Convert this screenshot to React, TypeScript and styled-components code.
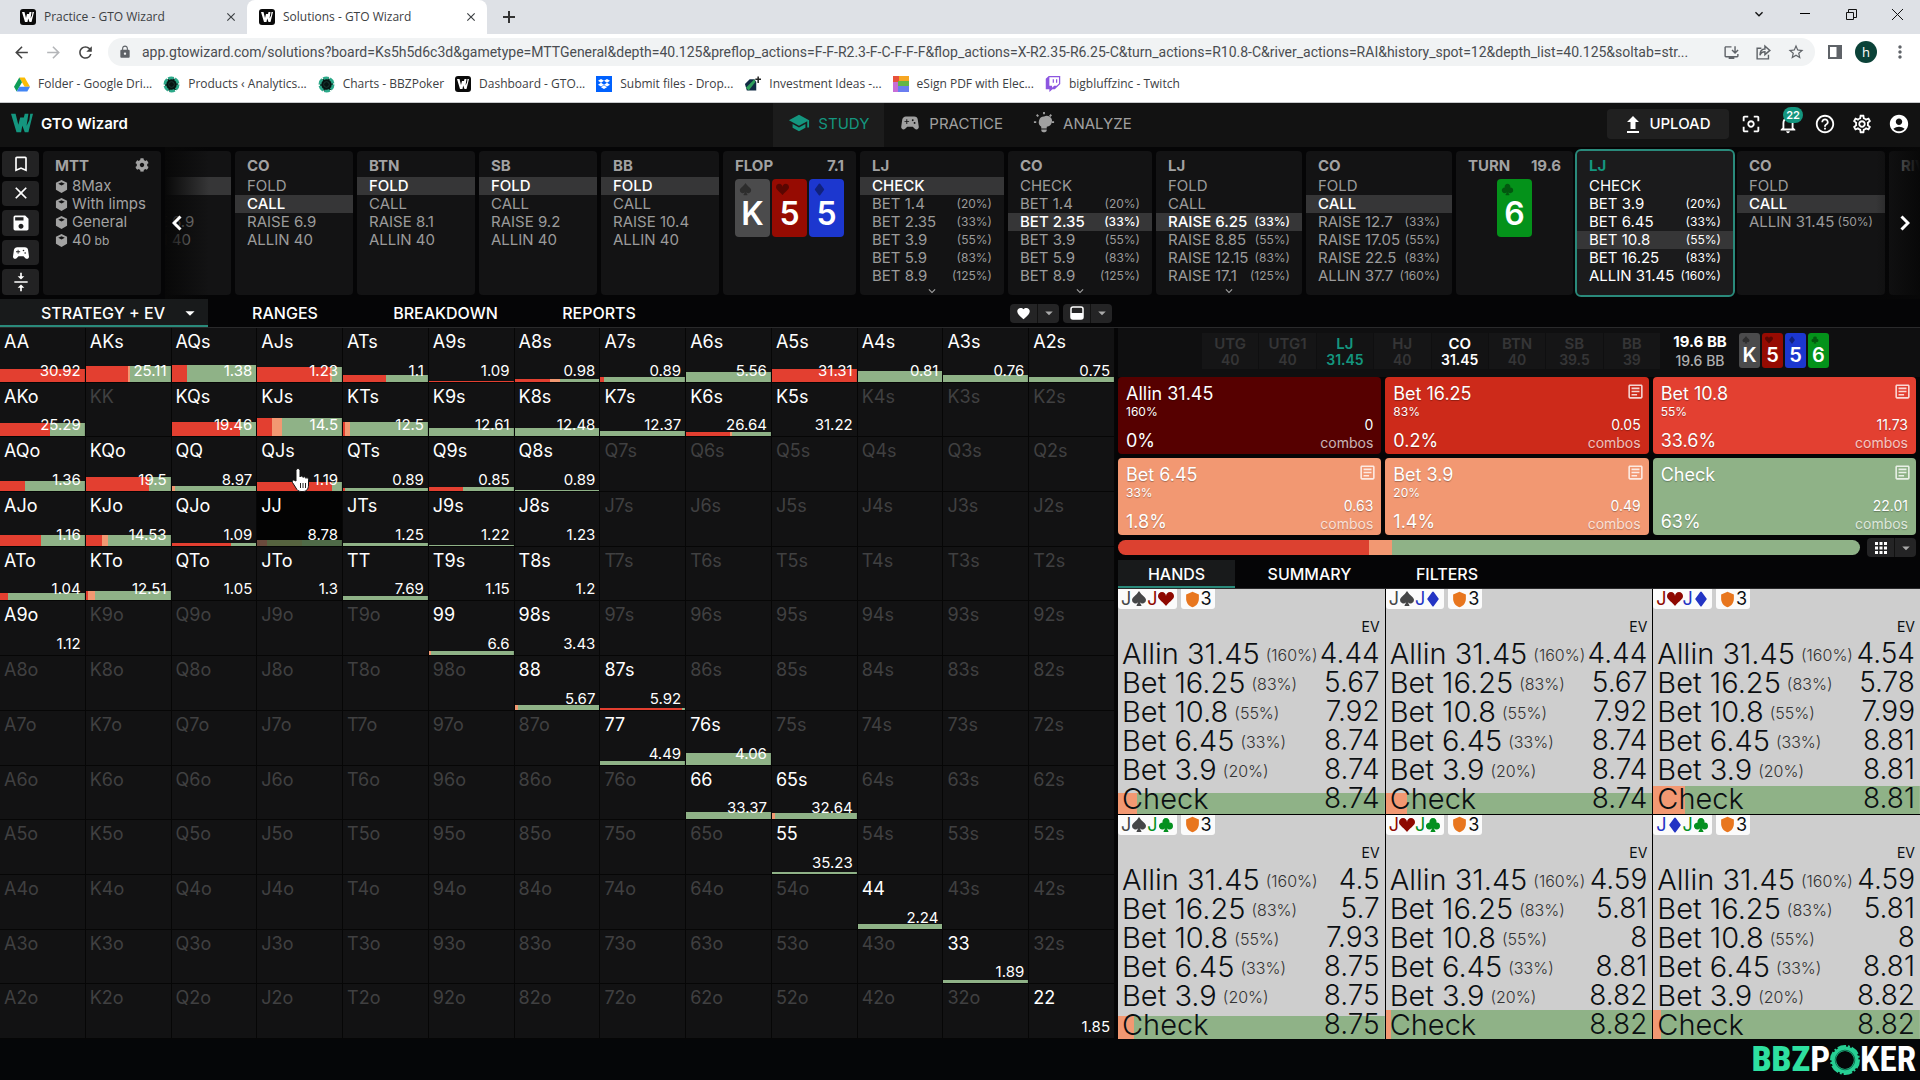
import React, { useLayoutEffect, useRef } from "react";
import styled, { createGlobalStyle, css } from "styled-components";
import {
  MdAccountCircle, MdApps, MdArrowBack, MdArrowDropDown, MdArrowForward, MdBookmarkBorder, MdCenterFocusWeak,
  MdClose, MdFavorite, MdHelpOutline, MdLock, MdMoreVert, MdNotificationsNone, MdOutlineArticle,
  MdOutlineSettings, MdRefresh, MdSave, MdSchool, MdShield, MdSportsEsports, MdStarBorder,
  MdVerticalAlignCenter, MdInstallDesktop, MdKeyboardArrowDown,
} from "react-icons/md";
import { BsSuitClubFill, BsSuitDiamondFill, BsSuitHeartFill, BsSuitSpadeFill } from "react-icons/bs";
import { FaCog, FaDropbox, FaTwitch } from "react-icons/fa";

const ui = '"Inter", "Roboto", sans-serif';
const chrome = '"Open Sans", "Noto Sans", sans-serif';
const teal = "#14967f";
const red = "#e33f30";
const salmon = "#f29872";
const green = "#8fb287";

const Global = createGlobalStyle`
  * { box-sizing: border-box; }
  body { margin: 0; background: #050506; color: #fff; font-family: ${ui}; }
  button { border: 0; padding: 0; margin: 0; background: none; color: inherit; font: inherit; cursor: pointer; }
`;

/* ---------- browser ---------- */

const Page = styled.div`
  min-height: 100vh;
  display: flex;
  flex-direction: column;
`;
const TabStrip = styled.div`
  display: flex;
  height: 34px;
  background: #dee1e6;
  color: #3c4043;
  font: 12px/34px ${chrome};
`;
const BrowserTab = styled.div<{ $active?: boolean }>`
  display: flex;
  align-items: center;
  gap: 8px;
  width: ${p => (p.$active ? 240 : 247)}px;
  padding: 0 9px 0 ${p => (p.$active ? 12 : 20)}px;
  border-radius: 8px 8px 0 0;
  background: ${p => (p.$active ? "#fff" : "transparent")};
  span { flex: 1; white-space: nowrap; }
`;
const Favicon = styled.i`
  flex: 0 0 16px;
  height: 16px;
  border-radius: 3px;
  background: #0a0a0a;
  display: grid;
  place-items: center;
`;
const PlainButton = styled.button`
  display: grid;
  place-items: center;
`;
const NewTab = styled(PlainButton)`
  width: 44px;
`;
const WindowButtons = styled.div`
  margin-left: auto;
  display: flex;
  align-items: center;
  color: #111;
  height: 28px;
  button { width: 46px; }
`;
const AddressRow = styled.div`
  display: flex;
  align-items: center;
  gap: 13px;
  height: 36px;
  padding: 0 10px 0 12px;
  background: #fff;
  color: #5f6368;
`;
const AddressBar = styled.label`
  flex: 1;
  display: flex;
  align-items: center;
  height: 28px;
  padding: 0 10px;
  border-radius: 14px;
  background: #f1f3f4;
`;
const AddressInput = styled.input`
  flex: 1;
  min-width: 0;
  margin-left: 10px;
  border: 0;
  padding: 0;
  outline: 0;
  background: none;
  color: #4a4d51;
  font: 14px/20px "Roboto", ${chrome};
`;
const AddressActions = styled.div`
  display: flex;
  gap: 15px;
`;
const Avatar = styled.button`
  width: 22px;
  height: 22px;
  border-radius: 50%;
  background: #0b4238;
  color: #fff;
  font: 13px/20px ${chrome};
`;
const Bookmarks = styled.nav`
  display: flex;
  align-items: center;
  height: 33px;
  padding: 0 14px 4px;
  gap: 11px;
  background: #fff;
  border-bottom: 1px solid #c8cacc;
`;
const Bookmark = styled.a`
  display: flex;
  align-items: center;
  gap: 8px;
  color: #3c4043;
  text-decoration: none;
  white-space: nowrap;
  font: 12px/20px ${chrome};
`;

/* ---------- app header ---------- */

const Header = styled.header`
  display: grid;
  grid-template-columns: 1fr auto 1fr;
  align-items: center;
  height: 44px;
  background: #121212;
`;
const Brand = styled.a`
  display: flex;
  align-items: center;
  gap: 8px;
  padding: 0 0 4px 11px;
  color: #fff;
  text-decoration: none;
  font-size: 15px;
  font-weight: 600;
`;
const Nav = styled.nav`
  display: flex;
  height: 44px;
`;
const NavLink = styled.a<{ $active?: boolean }>`
  display: flex;
  align-items: center;
  gap: 8px;
  padding: 0 15px 4px;
  color: ${p => (p.$active ? teal : "#a0a0a0")};
  background: ${p => (p.$active ? "#1c1c1c" : "transparent")};
  text-decoration: none;
  font-size: 15px;
`;
const Tools = styled.div`
  display: flex;
  align-items: center;
  justify-content: flex-end;
  gap: 11px;
  padding: 0 10px 3px 0;
`;
const ToolIcons = styled.div`
  display: flex;
  gap: 15px;
`;
const Upload = styled.button`
  display: flex;
  align-items: center;
  justify-content: center;
  gap: 8px;
  width: 122px;
  height: 30px;
  border-radius: 4px;
  background: #202020;
  font-size: 15px;
  font-weight: 500;
`;
const Bell = styled(PlainButton)`
  position: relative;
`;
const Badge = styled.span`
  position: absolute;
  left: 6px;
  top: -6px;
  width: 20px;
  height: 16px;
  border-radius: 8px;
  background: ${teal};
  font-size: 11px;
  line-height: 16px;
  font-weight: 600;
`;

/* ---------- action history ---------- */

const History = styled.section`
  display: flex;
  height: 152px;
  padding-left: 2px;
  gap: 4px;
`;
const SideButtons = styled.div`
  display: flex;
  flex-direction: column;
  gap: 4px;
  width: 37px;
  padding: 4px 0;
`;
const SideButton = styled(PlainButton)`
  flex: 1;
  border-radius: 4px;
  background: #222223;
`;
const panelBox = css`
  border-radius: 4px;
  background: #131314;
  padding-top: 4px;
`;
const GameInfo = styled.div`
  ${panelBox}
  width: 118px;
  margin: 4px 0;
  color: #a2a2a2;
`;
const PanelHead = styled.div<{ $active?: boolean }>`
  display: flex;
  justify-content: space-between;
  align-items: center;
  height: 20px;
  margin-bottom: 2px;
  padding: 0 12px;
  font-size: 15px;
  font-weight: 700;
  color: ${p => (p.$active ? teal : "#a2a2a2")};
`;
const InfoLine = styled.div`
  display: flex;
  align-items: center;
  gap: 4px;
  height: 18px;
  padding: 0 12px;
  font-size: 15px;
  line-height: 18px;
  white-space: nowrap;
  small { font-size: 12px; }
`;
const StripWrap = styled.div`
  position: relative;
  flex: 1;
  min-width: 0;
`;
const Strip = styled.div`
  display: flex;
  gap: 4px;
  height: 152px;
  padding: 4px 0;
  overflow: hidden;
`;
const Panel = styled.div<{ $w: number; $active?: boolean }>`
  ${panelBox}
  position: relative;
  flex: 0 0 ${p => p.$w}px;
  ${p => p.$active && css`background: #1b1b1c; outline: 2px solid #2a8a7b;`}
`;
const Action = styled.button<{ $on?: boolean; $live?: boolean }>`
  display: flex;
  justify-content: space-between;
  align-items: center;
  width: 100%;
  height: 18px;
  padding: 0 12px;
  font-size: 15px;
  line-height: 18px;
  white-space: nowrap;
  color: ${p => (p.$on || p.$live ? "#fff" : "#9b9b9b")};
  font-weight: ${p => (p.$on && !p.$live ? 500 : 400)};
  background: ${p => (p.$on ? "#363637" : "transparent")};
  small { font-size: 12px; }
`;
const More = styled.span`
  position: absolute;
  left: 0;
  right: 0;
  bottom: -3px;
  display: grid;
  place-items: center;
  color: #a0a0a0;
`;
const Scroller = styled.button<{ $right?: boolean }>`
  position: absolute;
  top: 0;
  bottom: 0;
  width: 44px;
  display: flex;
  align-items: center;
  ${p => (p.$right
    ? "right: 0; justify-content: flex-end; padding-right: 10px; background: linear-gradient(to left, #080808, transparent);"
    : "left: 0; padding-left: 7px; background: linear-gradient(to right, #080808, transparent);")}
`;
const Cards = styled.div<{ $center?: boolean }>`
  display: flex;
  gap: 2px;
  padding: 2px 12px;
  justify-content: ${p => (p.$center ? "center" : "space-between")};
`;
const suitBg: Record<string, string> = { s: "#4b4b4c", h: "#960b02", d: "#1c37cf", c: "#04921a" };
const CardBox = styled.div<{ $suit: string; $mini?: boolean }>`
  display: flex;
  flex-direction: column;
  align-items: center;
  width: ${p => (p.$mini ? 21 : 35)}px;
  height: ${p => (p.$mini ? 35 : 58)}px;
  padding: ${p => (p.$mini ? 3 : 4)}px;
  border-radius: ${p => (p.$mini ? 3 : 4)}px;
  background: ${p => suitBg[p.$suit]};
  font-size: ${p => (p.$mini ? 20 : 32)}px;
  line-height: ${p => (p.$mini ? 22 : 36)}px;
  font-weight: 600;
  svg { align-self: flex-start; color: rgba(0, 0, 0, 0.4); flex: none; }
`;

/* ---------- view tabs ---------- */

const TabsRow = styled.div`
  display: flex;
  align-items: stretch;
  height: 29px;
  border-bottom: 1px solid #2a2a2b;
`;
const ViewTab = styled.button<{ $active?: boolean; $menu?: boolean; $w: number }>`
  display: flex;
  align-items: center;
  justify-content: ${p => (p.$menu ? "flex-end" : "center")};
  gap: 14px;
  width: ${p => p.$w}px;
  padding: 2px ${p => (p.$menu ? 7 : 0)}px 0;
  border-bottom: 2px solid ${p => (p.$active ? "#2a8a7b" : "transparent")};
  background: ${p => (p.$active ? "#181a1b" : "transparent")};
  font-size: 16px;
  font-weight: 500;
  white-space: nowrap;
`;
const ViewOptions = styled.div`
  display: flex;
  align-items: center;
  gap: 4px;
  margin-left: 341px;
`;
const Split = styled.div`
  display: flex;
  width: 49px;
  height: 19px;
  border-radius: 4px;
  background: #242425;
  button { flex: 1 1 0; }
  button + button { flex: 0 0 22px; border-left: 1px solid #111; color: #aaa; }
`;

/* ---------- matrix ---------- */

const Main = styled.main`
  flex: 1;
  display: grid;
  grid-template-columns: 1115fr 802fr;
  gap: 3px;
`;
const Matrix = styled.div`
  display: grid;
  grid-template-columns: repeat(13, 1fr);
  grid-template-rows: repeat(13, 1fr);
`;
const Cell = styled.button<{ $bar?: string; $h: number; $dim: boolean; $hover: boolean }>`
  position: relative;
  display: flex;
  flex-direction: column;
  justify-content: space-between;
  min-width: 0;
  padding: 3px 4px 1px;
  border-right: 1px solid #060606;
  border-bottom: 1px solid #060606;
  text-align: left;
  background: ${p => (p.$bar ? `${p.$bar} bottom / 100% ${p.$h}px no-repeat` : "")} ${p => (p.$hover ? "#030303" : "#121213")};
  color: ${p => (p.$dim ? "#404041" : "#fff")};
  font-size: 18px;
  line-height: 22px;
  em { align-self: flex-end; font-style: normal; font-size: 15px; line-height: 20px; }
`;
const Pointer = styled.svg`
  position: absolute;
  left: 33px;
  top: 30px;
`;

/* ---------- right side ---------- */

const Side = styled.section`
  display: flex;
  flex-direction: column;
  min-width: 0;
`;
const Table = styled.div`
  display: flex;
  align-items: center;
  height: 49px;
  padding: 0 91px 4px 84px;
  background: #0f0f10;
`;
const Seat = styled.div<{ $tone?: string }>`
  flex: 1;
  height: 36px;
  margin-right: 1px;
  padding-top: 3px;
  background: ${p => (p.$tone ? "#131314" : "#151516")};
  color: ${p => p.$tone || "#353536"};
  text-align: center;
  font-size: 15px;
  line-height: 16px;
  font-weight: 600;
  span { display: block; font-size: 14px; }
`;
const Pot = styled.div`
  width: 78px;
  text-align: center;
  font-size: 15px;
  line-height: 19px;
  font-weight: 700;
  span { display: block; font-size: 14px; font-weight: 500; color: #b0b0b0; }
`;
const MiniCards = styled.div`
  display: flex;
  gap: 2px;
`;
const Choices = styled.div`
  display: grid;
  grid-template-columns: repeat(3, 1fr);
  gap: 4px;
  padding-right: 4px;
`;
const Choice = styled.button<{ $bg: string }>`
  display: grid;
  grid-template-columns: 1fr auto;
  grid-template-rows: 23px 14px 12px 20px;
  height: 77px;
  padding: 5px 8px 3px;
  border-radius: 4px;
  background: ${p => p.$bg};
  text-align: left;
  font-size: 18px;
  line-height: 23px;
  text-shadow: 0 1px 1px rgba(0, 0, 0, 0.3);
  i { grid-column: 2; display: flex; justify-content: flex-end; font-style: normal; margin-right: -4px; }
  small { grid-column: 1; font-size: 12px; line-height: 14px; }
  em { grid-column: 2; grid-row: 3; text-align: right; font-style: normal; font-size: 14px; line-height: 12px; }
  strong { grid-column: 1; grid-row: 4; font-weight: 400; line-height: 20px; }
  span { grid-column: 2; grid-row: 4; font-size: 14px; line-height: 24px; opacity: 0.7; text-align: right; }
`;
const FreqRow = styled.div`
  display: flex;
  align-items: center;
  gap: 7px;
  height: 25px;
  padding-right: 4px;
`;
const FreqBar = styled.div`
  flex: 1;
  height: 15px;
  border-radius: 8px;
  background: linear-gradient(to right, #dc4130 33.8%, ${salmon} 33.8% 36.9%, ${green} 36.9%);
`;
const Hands = styled.div`
  flex: 1;
  display: grid;
  grid-template-columns: repeat(3, 1fr);
  grid-auto-rows: 1fr;
  gap: 1px;
  background: #000;
`;
const Hand = styled.article<{ $h: number; $mix: number }>`
  min-width: 0;
  color: #0b0f12;
  background: linear-gradient(to right, ${salmon} ${p => p.$mix}%, ${green} ${p => p.$mix}%) bottom / 100% ${p => p.$h}px no-repeat #cecece;
`;
const Chips = styled.div`
  display: flex;
  gap: 4px;
  height: 20px;
  span {
    display: flex;
    align-items: center;
    padding: 0 3px;
    border-radius: 0 0 3px 3px;
    background: #fbfbfb;
    font-size: 18px;
    line-height: 20px;
  }
`;
const EvTable = styled.table`
  width: 100%;
  border-spacing: 0;
  font-weight: 300;
  white-space: nowrap;
  th, td { padding: 0; height: 29px; font-weight: inherit; vertical-align: top; }
  thead th { padding: 5px 5px 0 0; line-height: 25px; font-size: 14px; font-weight: 400; text-align: right; }
  tbody th { padding-left: 4px; font-size: 29px; line-height: 29px; text-align: left; }
  tbody td { padding-right: 5px; font-size: 28px; line-height: 29px; text-align: right; }
  small { margin-left: 6px; font-size: 16px; line-height: 0; vertical-align: 3px; color: #333; }
`;
const Footer = styled.footer`
  display: flex;
  justify-content: flex-end;
  align-items: center;
  height: 41px;
  padding-right: 4px;
  background: #050608;
`;
const Logo = styled.div`
  display: flex;
  align-items: center;
  font: 700 35px/40px "Roboto Condensed", "Liberation Sans Narrow", "Open Sans Condensed", "Liberation Sans", sans-serif;
  b { color: #2ee0a0; }
`;

/* ---------- data ---------- */

type A = [string, string?];
interface P { name: string; w: number; rows?: A[]; on?: number; more?: boolean; active?: boolean; cards?: string[]; pot?: string }
const panels: P[] = [
  { name: "HJ", w: 118, rows: [["FOLD"], ["CALL"], ["RAISE 6.9"], ["ALLIN 40"]], on: 0 },
  { name: "CO", w: 118, rows: [["FOLD"], ["CALL"], ["RAISE 6.9"], ["ALLIN 40"]], on: 1 },
  { name: "BTN", w: 118, rows: [["FOLD"], ["CALL"], ["RAISE 8.1"], ["ALLIN 40"]], on: 0 },
  { name: "SB", w: 118, rows: [["FOLD"], ["CALL"], ["RAISE 9.2"], ["ALLIN 40"]], on: 0 },
  { name: "BB", w: 118, rows: [["FOLD"], ["CALL"], ["RAISE 10.4"], ["ALLIN 40"]], on: 0 },
  { name: "FLOP", w: 132, pot: "7.1", cards: ["Ks", "5h", "5d"] },
  { name: "LJ", w: 144, rows: [["CHECK"], ["BET 1.4", "20"], ["BET 2.35", "33"], ["BET 3.9", "55"], ["BET 5.9", "83"], ["BET 8.9", "125"]], on: 0, more: true },
  { name: "CO", w: 144, rows: [["CHECK"], ["BET 1.4", "20"], ["BET 2.35", "33"], ["BET 3.9", "55"], ["BET 5.9", "83"], ["BET 8.9", "125"]], on: 2, more: true },
  { name: "LJ", w: 146, rows: [["FOLD"], ["CALL"], ["RAISE 6.25", "33"], ["RAISE 8.85", "55"], ["RAISE 12.15", "83"], ["RAISE 17.1", "125"]], on: 2, more: true },
  { name: "CO", w: 146, rows: [["FOLD"], ["CALL"], ["RAISE 12.7", "33"], ["RAISE 17.05", "55"], ["RAISE 22.5", "83"], ["ALLIN 37.7", "160"]], on: 1 },
  { name: "TURN", w: 117, pot: "19.6", cards: ["6c"] },
  { name: "LJ", w: 156, rows: [["CHECK"], ["BET 3.9", "20"], ["BET 6.45", "33"], ["BET 10.8", "55"], ["BET 16.25", "83"], ["ALLIN 31.45", "160"]], on: 3, active: true },
  { name: "CO", w: 148, rows: [["FOLD"], ["CALL"], ["ALLIN 31.45", "50"]], on: 1 },
  { name: "RIVER", w: 118, rows: [] },
];

const ranks = "AKQJT98765432".split("");
/* hand: [ev, bar height, raise %, small bet %] */
const hands: Record<string, [string, number, number, number]> = {
  AA: ["30.92", 13, 100, 0], AKs: ["25.11", 16, 50, 2], AQs: ["1.38", 17, 18, 0], AJs: ["1.23", 15, 86, 2],
  ATs: ["1.1", 7, 51, 0], A9s: ["1.09", 1, 100, 0], A8s: ["0.98", 3, 42, 11], A7s: ["0.89", 5, 5, 0],
  A6s: ["5.56", 10, 0, 0], A5s: ["31.31", 13, 100, 0], A4s: ["0.81", 11, 0, 0], A3s: ["0.76", 7, 0, 0], A2s: ["0.75", 5, 0, 0],
  AKo: ["25.29", 13, 59, 0], KQs: ["19.46", 14, 81, 0], KJs: ["14.5", 18, 18, 12], KTs: ["12.5", 14, 2, 6],
  K9s: ["12.61", 8, 0, 0], K8s: ["12.48", 8, 0, 0], K7s: ["12.37", 5, 0, 0], K6s: ["26.64", 4, 52, 2], K5s: ["31.22", 0, 0, 0],
  AQo: ["1.36", 10, 30, 0], KQo: ["19.5", 14, 74, 0], QQ: ["8.97", 5, 0, 4], QJs: ["1.19", 9, 88, 0],
  QTs: ["0.89", 3, 3, 0], Q9s: ["0.85", 4, 40, 0], Q8s: ["0.89", 1, 0, 0],
  AJo: ["1.16", 11, 48, 0], KJo: ["14.53", 11, 19, 7], QJo: ["1.09", 3, 70, 0], JJ: ["8.78", 6, 0, 0],
  JTs: ["1.25", 3, 0, 0], J9s: ["1.22", 1, 0, 0], J8s: ["1.23", 0, 0, 0],
  ATo: ["1.04", 7, 10, 0], KTo: ["12.51", 9, 3, 8], QTo: ["1.05", 0, 0, 0], JTo: ["1.3", 0, 0, 0],
  TT: ["7.69", 4, 0, 0], T9s: ["1.15", 0, 0, 0], T8s: ["1.2", 0, 0, 0],
  A9o: ["1.12", 0, 0, 0], "99": ["6.6", 4, 0, 3], "98s": ["3.43", 0, 0, 0], "88": ["5.67", 5, 0, 4], "87s": ["5.92", 2, 97, 0],
  "77": ["4.49", 4, 0, 0], "76s": ["4.06", 12, 0, 0], "66": ["33.37", 7, 0, 0], "65s": ["32.64", 6, 0, 4],
  "55": ["35.23", 2, 0, 0], "44": ["2.24", 5, 0, 0], "33": ["1.89", 3, 0, 0], "22": ["1.85", 0, 0, 0],
};

const seats: [string, string, string?][] = [
  ["UTG", "40"], ["UTG1", "40"], ["LJ", "31.45", teal], ["HJ", "40"], ["CO", "31.45", "#fff"], ["BTN", "40"], ["SB", "39.5"], ["BB", "39"],
];
const choices: [string, string, string, string, string][] = [
  ["Allin 31.45", "160%", "0", "0%", "#560000"],
  ["Bet 16.25", "83%", "0.05", "0.2%", "#cd2a1a"],
  ["Bet 10.8", "55%", "11.73", "33.6%", "#e34031"],
  ["Bet 6.45", "33%", "0.63", "1.8%", salmon],
  ["Bet 3.9", "20%", "0.49", "1.4%", salmon],
  ["Check", "", "22.01", "63%", green],
];
const bets: [string, string][] = [
  ["Allin 31.45", "(160%)"], ["Bet 16.25", "(83%)"], ["Bet 10.8", "(55%)"], ["Bet 6.45", "(33%)"], ["Bet 3.9", "(20%)"], ["Check", ""],
];
const combos: { suits: string; ev: string[]; h: number; mix: number }[] = [
  { suits: "sh", ev: ["4.44", "5.67", "7.92", "8.74", "8.74", "8.74"], h: 21, mix: 7 },
  { suits: "sd", ev: ["4.44", "5.67", "7.92", "8.74", "8.74", "8.74"], h: 21, mix: 8 },
  { suits: "hd", ev: ["4.54", "5.78", "7.99", "8.81", "8.81", "8.81"], h: 28, mix: 12 },
  { suits: "sc", ev: ["4.5", "5.7", "7.93", "8.75", "8.75", "8.75"], h: 23, mix: 6 },
  { suits: "hc", ev: ["4.59", "5.81", "8", "8.81", "8.82", "8.82"], h: 29, mix: 2 },
  { suits: "dc", ev: ["4.59", "5.81", "8", "8.81", "8.82", "8.82"], h: 29, mix: 3 },
];

const suitInk: Record<string, string> = { s: "#454647", h: "#8e0800", d: "#2334c4", c: "#04901f" };
const suitIcons: Record<string, React.ComponentType<any>> = { s: BsSuitSpadeFill, h: BsSuitHeartFill, d: BsSuitDiamondFill, c: BsSuitClubFill };
const SuitRank = styled.b<{ $suit: string }>`
  color: ${p => suitInk[p.$suit]};
  font-weight: 400;
`;

/* ---------- drawings ---------- */

const WMark = ({ size = 12, color = "#fff" }) => (
  <svg width={size} height={size} viewBox="0 0 24 24" fill={color} aria-hidden>
    <path d="M0 2h5l3 12 2-8h4l-3 16H6zM12 14l3-12h4l-2 13 3-6 1-7h3l-5 20h-4z" />
  </svg>
);
const DriveMark = () => (
  <svg width="16" height="15" viewBox="0 0 16 14" aria-hidden>
    <path fill="#fbbc04" d="M5.3 0h5.4L16 9.3h-5.4z" />
    <path fill="#0f9d58" d="M5.3 0L8 4.7 2.7 14 0 9.3z" />
    <path fill="#4285f4" d="M5.4 9.3H16L13.3 14H2.7z" />
  </svg>
);
const ChipMark = () => (
  <svg width="17" height="17" viewBox="0 0 18 18" aria-hidden>
    <circle cx="9" cy="9" r="7" fill="#061512" stroke="#2ba888" strokeWidth="3" strokeDasharray="6 1.3" />
    <circle cx="9" cy="9" r="3" fill="none" stroke="#1b3a34" />
  </svg>
);
const LeafMark = () => (
  <svg width="17" height="16" viewBox="0 0 18 16" aria-hidden>
    <path fill="#102a44" d="M1 8l5-5h5l2 3v9H3z" />
    <path fill="#2e9e5b" d="M2 12L11 3l1 3-7 9z" />
    <path stroke="#222" strokeWidth="1.6" d="M15 0v7M12 3h6" />
  </svg>
);
const RainbowMark = () => (
  <svg width="16" height="16" viewBox="0 0 16 16" aria-hidden>
    <path fill="#e8503a" d="M0 0h6v6H0z" /><path fill="#f6a623" d="M6 0h10v5H6z" />
    <path fill="#63b646" d="M5 5h11v5H5z" /><path fill="#c86dd7" d="M0 6h5v10H0z" /><path fill="#6a7df0" d="M5 10h11v6H5z" />
  </svg>
);
const DropboxMark = () => (
  <svg width="16" height="16" viewBox="0 0 16 16" aria-hidden>
    <rect width="16" height="16" fill="#0061fe" />
    <FaDropbox x={2} y={2} size={12} color="#fff" />
  </svg>
);
const CubeMark = () => (
  <svg width="13" height="13" viewBox="0 0 14 14" aria-hidden>
    <path d="M7 0l6 3v7.500L7 14l-6-3.500V3z" fill="#a2a2a2" />
    <path d="M3.500 4L7 2.300 10.500 4 7 5.800z" fill="#131314" />
  </svg>
);
const Chevron = ({ right }: { right?: boolean }) => (
  <svg width="10" height="16" viewBox="0 0 10 16" fill="none" stroke="#fff" strokeWidth="3" aria-hidden>
    <path d={right ? "M1.500 1.500L8 8l-6.500 6.500" : "M8.500 1.500L2 8l6.500 6.500"} />
  </svg>
);
const BulbMark = () => (
  <svg width="22" height="22" viewBox="0 0 24 24" fill="currentColor" aria-hidden>
    <path d="M12 5a6 6 0 0 0-3 11v2h6v-2a6 6 0 0 0 3-11 6 6 0 0 0-6 0zM9 19h6v1a2 2 0 0 1-2 2h-2a2 2 0 0 1-2-2z" />
    <path stroke="currentColor" strokeWidth="2" d="M12 0v2.500M1 11h2.500M20.500 11H23M4 3l1.800 1.800M20 3l-1.800 1.800" />
  </svg>
);
const UploadMark = () => (
  <svg width="16" height="18" viewBox="0 0 16 18" fill="currentColor" aria-hidden>
    <path d="M8 1l6 6h-3.500v7h-5V7H2zM2 16h12v2H2z" />
  </svg>
);
const ShareMark = () => (
  <svg width="17" height="17" viewBox="0 0 24 24" fill="none" stroke="currentColor" strokeWidth="2" aria-hidden>
    <path d="M9 6H3v15h16v-6M14 3l7 6-7 6v-4c-4 0-6 2-7 5 0-6 3-9 7-9z" />
  </svg>
);
const PanelMark = () => (
  <svg width="14" height="14" viewBox="0 0 14 14" fill="none" stroke="currentColor" strokeWidth="2" aria-hidden>
    <path d="M1 1h12v12H1z" /><path d="M10.500 1v12" strokeWidth="4" />
  </svg>
);
const RestoreMark = () => (
  <svg width="11" height="11" viewBox="0 0 11 11" fill="none" stroke="currentColor" aria-hidden>
    <path d="M.5 3.500h7v7h-7zM2.500 3V.5h8v8H8" />
  </svg>
);
const ChipO = () => (
  <svg width="30" height="32" viewBox="0 0 32 32" aria-hidden>
    <circle cx="16" cy="16" r="12" fill="none" stroke="#27cf94" strokeWidth="5" />
    <circle cx="16" cy="16" r="14.500" fill="none" stroke="#27cf94" strokeWidth="3" strokeDasharray="9 2 2 2" />
    <circle cx="16" cy="16" r="10.500" fill="none" stroke="#0c6b4c" />
  </svg>
);
const HalfBox = () => (
  <svg width="14" height="14" viewBox="0 0 14 14" aria-hidden>
    <rect x="1" y="1" width="12" height="12" rx="2" fill="none" stroke="#fff" strokeWidth="1.500" />
    <path d="M1 7h12v6H1z" fill="#fff" />
  </svg>
);
const Card = ({ code, mini }: { code: string; mini?: boolean }) => {
  const Icon = suitIcons[code[1]];
  return (
    <CardBox $suit={code[1]} $mini={mini}>
      <Icon size={mini ? 8 : 13} />
      {code[0]}
    </CardBox>
  );
};

const bookmarks: [React.ReactNode, string][] = [
  [<DriveMark />, "Folder - Google Dri..."], [<ChipMark />, "Products ‹ Analytics..."], [<ChipMark />, "Charts - BBZPoker"],
  [<Favicon><WMark /></Favicon>, "Dashboard - GTO..."], [<DropboxMark />, "Submit files - Drop..."],
  [<LeafMark />, "Investment Ideas -..."], [<RainbowMark />, "eSign PDF with Elec..."], [<FaTwitch size={16} color="#8c55e0" />, "bigbluffzinc - Twitch"],
];

const url = "app.gtowizard.com/solutions?board=Ks5h5d6c3d&gametype=MTTGeneral&depth=40.125&preflop_actions=F-F-R2.3-F-C-F-F-F&flop_actions=X-R2.35-R6.25-C&turn_actions=R10.8-C&river_actions=RAI&history_spot=12&depth_list=40.125&soltab=str...";

function Browser() {
  return (
    <>
      <TabStrip>
        <BrowserTab>
          <Favicon><WMark /></Favicon><span>Practice - GTO Wizard</span>
          <PlainButton aria-label="Close tab"><MdClose size={14} /></PlainButton>
        </BrowserTab>
        <BrowserTab $active>
          <Favicon><WMark /></Favicon><span>Solutions - GTO Wizard</span>
          <PlainButton aria-label="Close tab"><MdClose size={14} /></PlainButton>
        </BrowserTab>
        <NewTab aria-label="New tab">
          <svg width="12" height="12" stroke="#333" strokeWidth="2"><path d="M6 0v12M0 6h12" /></svg>
        </NewTab>
        <WindowButtons>
          <PlainButton aria-label="Search tabs"><MdKeyboardArrowDown size={16} /></PlainButton>
          <PlainButton aria-label="Minimize"><svg width="10" height="2"><path d="M0 0h10v1H0z" /></svg></PlainButton>
          <PlainButton aria-label="Restore"><RestoreMark /></PlainButton>
          <PlainButton aria-label="Close"><svg width="11" height="11" stroke="#111"><path d="M0 0l11 11M11 0L0 11" /></svg></PlainButton>
        </WindowButtons>
      </TabStrip>
      <AddressRow>
        <PlainButton aria-label="Back"><MdArrowBack size={19} color="#444" /></PlainButton>
        <PlainButton aria-label="Forward"><MdArrowForward size={19} color="#b4b6b9" /></PlainButton>
        <PlainButton aria-label="Reload"><MdRefresh size={19} color="#444" /></PlainButton>
        <AddressBar>
          <MdLock size={14} />
          <AddressInput aria-label="Address" defaultValue={url} />
          <AddressActions>
            <PlainButton aria-label="Install"><MdInstallDesktop size={17} /></PlainButton>
            <PlainButton aria-label="Share"><ShareMark /></PlainButton>
            <PlainButton aria-label="Bookmark"><MdStarBorder size={18} /></PlainButton>
          </AddressActions>
        </AddressBar>
        <PlainButton aria-label="Side panel"><PanelMark /></PlainButton>
        <Avatar aria-label="Profile">h</Avatar>
        <PlainButton aria-label="Menu"><MdMoreVert size={20} /></PlainButton>
      </AddressRow>
      <Bookmarks>
        {bookmarks.map(([icon, text]) => <Bookmark href="#" key={text}>{icon}{text}</Bookmark>)}
      </Bookmarks>
    </>
  );
}

function ActionStrip() {
  const ref = useRef<HTMLDivElement>(null);
  useLayoutEffect(() => { if (ref.current) ref.current.scrollLeft = 52; }, []);
  return (
    <StripWrap>
      <Strip ref={ref}>
        {panels.map((p, i) => (
          <Panel key={i} $w={p.w} $active={p.active}>
            <PanelHead $active={p.active}><span>{p.name}</span>{p.pot && <span>{p.pot}</span>}</PanelHead>
            {p.rows?.map(([name, pct], j) => (
              <Action key={name} $on={p.on === j} $live={p.active}>
                <span>{name}</span>{pct && <small>({pct}%)</small>}
              </Action>
            ))}
            {p.cards && <Cards $center={p.cards.length === 1}>{p.cards.map((c, j) => <Card key={j} code={c} />)}</Cards>}
            {p.more && <More><MdKeyboardArrowDown size={14} /></More>}
          </Panel>
        ))}
      </Strip>
      <Scroller aria-label="Scroll left"><Chevron /></Scroller>
      <Scroller aria-label="Scroll right" $right><Chevron right /></Scroller>
    </StripWrap>
  );
}

function barOf(key: string, r: number, s: number) {
  if (key === "JJ") return "linear-gradient(to right, #6b4a3c 0 12%, #56633f 12% 53%, #4f6a48 53%)";
  return `linear-gradient(to right, ${red} ${r}%, ${salmon} ${r}% ${r + s}%, ${green} ${r + s}%)`;
}

function HandMatrix() {
  return (
    <Matrix>
      {ranks.flatMap((row, i) => ranks.map((col, j) => {
        const key = i === j ? row + col : i < j ? `${row}${col}s` : `${col}${row}o`;
        const data = hands[key];
        return (
          <Cell key={key} $dim={!data} $hover={key === "JJ"} $h={data ? data[1] : 0} $bar={data && data[1] ? barOf(key, data[2], data[3]) : undefined}>
            {key}
            {data && <em>{data[0]}</em>}
            {key === "QJs" && (
              <Pointer width="20" height="26" viewBox="0 0 20 26" aria-hidden>
                <path d="M6 14V3.500a2 2 0 0 1 4 0V10c.5-1.500 3-1 3 .5.6-1.200 2.800-.8 2.800.8.8-1 2.700-.4 2.700 1.200V18c0 4-2 6.500-5.500 6.500H11c-2.500 0-4-1.500-5-3.500L2.500 15.500c-1-2 1-3.300 2.300-2z" fill="#fff" stroke="#111" />
                <path d="M10.500 16v5M13 16v5M15.500 16v5" stroke="#222" />
              </Pointer>
            )}
          </Cell>
        );
      }))}
    </Matrix>
  );
}

function Details() {
  return (
    <Side>
      <Table>
        {seats.map(([n, s, tone]) => <Seat key={n} $tone={tone}>{n}<span>{s}</span></Seat>)}
        <Pot>19.6 BB<span>19.6 BB</span></Pot>
        <MiniCards>{["Ks", "5h", "5d", "6c"].map(c => <Card key={c} code={c} mini />)}</MiniCards>
      </Table>
      <Choices>
        {choices.map(([t, pct, n, f, bg], i) => (
          <Choice key={t} $bg={bg}>
            {t}
            <i>{i > 0 && <MdOutlineArticle size={19} color="rgba(255,255,255,.8)" />}</i>
            <small>{pct}</small><em>{n}</em><strong>{f}</strong><span>combos</span>
          </Choice>
        ))}
      </Choices>
      <FreqRow>
        <FreqBar />
        <Split>
          <PlainButton aria-label="Grid view"><MdApps size={18} /></PlainButton>
          <PlainButton aria-label="Grid options"><MdArrowDropDown size={18} /></PlainButton>
        </Split>
      </FreqRow>
      <TabsRow role="tablist">
        <ViewTab role="tab" $active $w={117}>HANDS</ViewTab>
        <ViewTab role="tab" $w={149}>SUMMARY</ViewTab>
        <ViewTab role="tab" $w={126}>FILTERS</ViewTab>
      </TabsRow>
      <Hands>
        {combos.map(c => (
          <Hand key={c.suits} $h={c.h} $mix={c.mix}>
            <Chips>
              <span>
                {c.suits.split("").map(s => {
                  const Icon = suitIcons[s];
                  return <React.Fragment key={s}><SuitRank $suit={s}>J</SuitRank><Icon size={16} color={suitInk[s]} /></React.Fragment>;
                })}
              </span>
              <span><MdShield size={17} color="#e8761e" />3</span>
            </Chips>
            <EvTable>
              <thead><tr><th /><th>EV</th></tr></thead>
              <tbody>
                {bets.map(([n, pct], i) => <tr key={n}><th scope="row">{n}{pct && <small>{pct}</small>}</th><td>{c.ev[i]}</td></tr>)}
              </tbody>
            </EvTable>
          </Hand>
        ))}
      </Hands>
    </Side>
  );
}

export default function App() {
  return (
    <Page>
      <Global />
      <Browser />
      <Header>
        <Brand href="#"><WMark size={22} color={teal} />GTO Wizard</Brand>
        <Nav>
          <NavLink href="#" $active><MdSchool size={22} />STUDY</NavLink>
          <NavLink href="#"><MdSportsEsports size={22} />PRACTICE</NavLink>
          <NavLink href="#"><BulbMark />ANALYZE</NavLink>
        </Nav>
        <Tools>
          <Upload><UploadMark />UPLOAD</Upload>
          <ToolIcons>
            <PlainButton aria-label="Focus"><MdCenterFocusWeak size={22} /></PlainButton>
            <Bell aria-label="Notifications"><MdNotificationsNone size={22} /><Badge>22</Badge></Bell>
            <PlainButton aria-label="Help"><MdHelpOutline size={22} /></PlainButton>
            <PlainButton aria-label="Settings"><MdOutlineSettings size={22} /></PlainButton>
            <PlainButton aria-label="Account"><MdAccountCircle size={22} /></PlainButton>
          </ToolIcons>
        </Tools>
      </Header>
      <History>
        <SideButtons>
          <SideButton aria-label="Bookmark"><MdBookmarkBorder size={20} /></SideButton>
          <SideButton aria-label="Clear"><MdClose size={20} /></SideButton>
          <SideButton aria-label="Save"><MdSave size={20} /></SideButton>
          <SideButton aria-label="Play"><MdSportsEsports size={20} /></SideButton>
          <SideButton aria-label="Collapse"><MdVerticalAlignCenter size={20} /></SideButton>
        </SideButtons>
        <GameInfo>
          <PanelHead>MTT<FaCog size={14} /></PanelHead>
          <InfoLine><CubeMark />8Max</InfoLine>
          <InfoLine><CubeMark />With limps</InfoLine>
          <InfoLine><CubeMark />General</InfoLine>
          <InfoLine><CubeMark /><span>40<small> bb</small></span></InfoLine>
        </GameInfo>
        <ActionStrip />
      </History>
      <TabsRow role="tablist">
        <ViewTab role="tab" $active $menu $w={208}>STRATEGY + EV<MdArrowDropDown size={22} /></ViewTab>
        <ViewTab role="tab" $w={154}>RANGES</ViewTab>
        <ViewTab role="tab" $w={167}>BREAKDOWN</ViewTab>
        <ViewTab role="tab" $w={140}>REPORTS</ViewTab>
        <ViewOptions>
          <Split>
            <PlainButton aria-label="Favorite"><MdFavorite size={15} /></PlainButton>
            <PlainButton aria-label="Favorite options"><MdArrowDropDown size={18} /></PlainButton>
          </Split>
          <Split>
            <PlainButton aria-label="Layout"><HalfBox /></PlainButton>
            <PlainButton aria-label="Layout options"><MdArrowDropDown size={18} /></PlainButton>
          </Split>
        </ViewOptions>
      </TabsRow>
      <Main>
        <HandMatrix />
        <Details />
      </Main>
      <Footer>
        <Logo aria-label="BBZPOKER"><b>BBZ</b>P<ChipO />KER</Logo>
      </Footer>
    </Page>
  );
}
